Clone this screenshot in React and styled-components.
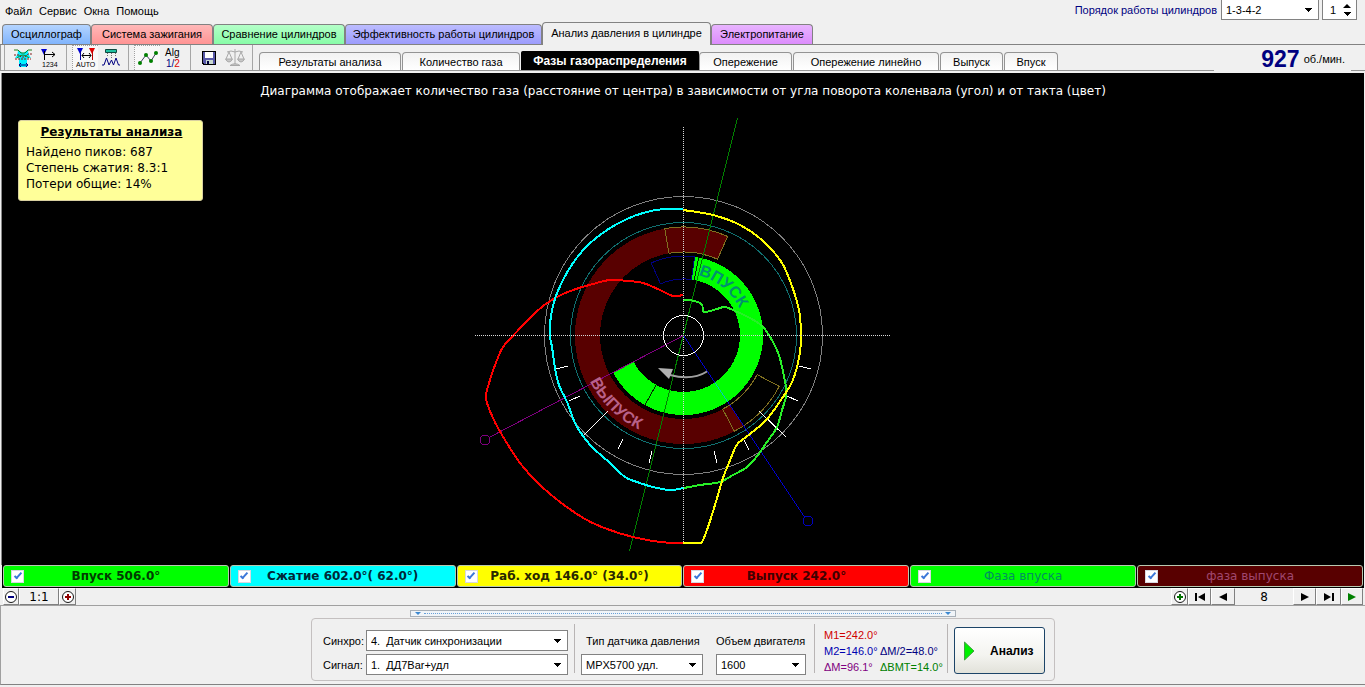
import React from "react";
import styled, { createGlobalStyle, css } from "styled-components";

const UI = '"Liberation Sans", Arial, sans-serif';
const WIDE = '"DejaVu Sans", Verdana, sans-serif';

const Global = createGlobalStyle`
  *, *::before, *::after { box-sizing: border-box; }
  body { margin: 0; background: #f0f0f0; color: #000; font: 11px/14px ${UI}; }
  button, input, select { font: inherit; color: inherit; margin: 0; padding: 0; border-radius: 0; }
  svg { display: block; }
`;

const Window = styled.div`
  min-height: 100vh;
  display: flex;
  flex-direction: column;
  overflow: hidden;
`;

const TopBar = styled.header`
  display: flex;
  justify-content: space-between;
  height: 22px;
  padding: 0 8px 0 5px;
`;

const Menu = styled.nav`
  display: flex;
  align-items: center;
  gap: 7px;
`;

const MenuItem = styled.button`
  border: 0;
  background: none;
`;

const OrderGroup = styled.div`
  display: flex;
  align-items: flex-start;
  gap: 3px;
  & > label { padding-right: 1px; color: #000080; line-height: 20px; }
`;

const Field = styled.div`
  position: relative;
  width: ${(p) => p.$w}px;
  height: ${(p) => (p.$clipped ? 20 : 21)}px;
  flex: none;
  background: #fff;
  border: 1px solid #828282;
  ${(p) => p.$clipped && css`border-top: 0;`}
  & > svg { position: absolute; right: 6px; top: 8px; pointer-events: none; }
`;

const Select = styled.select`
  appearance: none;
  width: 100%;
  height: 100%;
  border: 0;
  padding: 0 18px 0 4px;
  background: transparent;
  outline: none;
`;

const Spinner = styled.div`
  display: flex;
  width: 35px;
  height: 20px;
  background: #fff;
  border: 1px solid #828282;
  border-top: 0;
  & > input { width: 20px; border: 0; padding-left: 7px; background: none; outline: none; }
`;

const SpinButtons = styled.div`
  display: flex;
  flex-direction: column;
  justify-content: center;
  gap: 4px;
`;

const SpinButton = styled.button`
  display: block;
  border: 0;
  background: none;
`;

const TabBar = styled.div`
  display: flex;
  align-items: flex-end;
  height: 23px;
  padding-left: 2px;
  border-bottom: 1px solid #828282;
`;

const MainTab = styled.button`
  width: ${(p) => p.$w}px;
  height: 20px;
  flex: none;
  padding-bottom: 1px;
  border: 1px solid #828282;
  border-bottom: 0;
  border-radius: 4px 4px 0 0;
  background: ${(p) => p.$bg};
  white-space: nowrap;
  ${(p) => p.$active && css`
    height: 23px;
    margin-bottom: -1px;
    padding-bottom: 2px;
  `}
`;

const ToolRow = styled.div`
  display: flex;
  align-items: flex-end;
  height: 26px;
  padding-left: 3px;
  border-left: 1px solid #989898;
  border-bottom: 1px solid #949494;
`;

const Tools = styled.div`
  display: flex;
  height: 25px;
  flex: none;
`;

const Separator = styled.span`
  width: 1px;
  margin: 0 5px 0 4px;
  background: #a6a6a6;
  &:first-child { margin-left: 0; }
`;

const Tool = styled.button`
  display: grid;
  place-items: center;
  width: 26px;
  height: 25px;
  border: 0;
  background: none;
  ${(p) => p.$pressed && css`
    background: #f8f8f8;
    border: 1px dotted #a0a0a0;
    border-width: 1px 0 0 1px;
  `}
`;

const SubTabs = styled.div`
  display: flex;
  align-items: flex-end;
  gap: 1px;
  flex: 1;
  padding-left: 1px;
`;

const SubTab = styled.button`
  width: ${(p) => p.$w}px;
  height: 18px;
  flex: none;
  border: 1px solid #949494;
  border-bottom: 0;
  border-radius: 4px 4px 0 0;
  background: linear-gradient(#f2f2f2, #fff);
  white-space: nowrap;
  ${(p) => p.$active && css`
    height: 19px;
    margin-right: -1px;
    border-color: #000;
    border-radius: 2px 2px 0 0;
    background: #000;
    color: #fff;
    font-size: 12px;
    font-weight: bold;
  `}
`;

const Rpm = styled.div`
  display: flex;
  align-items: center;
  justify-content: flex-end;
  gap: 4px;
  width: 137px;
  height: 25px;
  margin: 0 14px -1px 0;
  padding-right: 6px;
  background: #f0f0f0;
  & > strong { color: #000080; font-size: 23px; line-height: 24px; }
`;

const Canvas = styled.main`
  position: relative;
  display: flex;
  flex-direction: column;
  align-items: center;
  flex: 1;
  margin: 2px 1px 0 1px;
  padding-top: 10px;
  border-left: 1px solid #888;
  background: #000;
`;

const Title = styled.h1`
  margin: 0 0 12px;
  color: #fff;
  font: 12px/16px ${WIDE};
`;

const Note = styled.aside`
  position: absolute;
  left: 16px;
  top: 47px;
  width: 185px;
  height: 81px;
  padding: 3px 8px;
  border: 1px solid #d8d0a0;
  border-radius: 3px;
  background: #ffff99;
  font: 12px/16px ${WIDE};
  & > h2 { margin: 0 0 4px; padding-left: 2px; font-size: 12px; text-align: center; text-decoration: underline; white-space: nowrap; }
  & > p { margin: 0 0 0 -1px; white-space: nowrap; }
`;

const Chart = styled.svg`
  width: 420px;
  height: 446px;
`;

const RingText = styled.text`
  font: bold 16px ${UI};
  fill: ${(p) => p.$color};
`;

const Legend = styled.div`
  display: flex;
  gap: 1px;
  margin: 0 1px 0 2px;
  padding: 0 1px;
  background: #000;
`;

const LegendItem = styled.label`
  display: grid;
  grid-template-columns: 13px 1fr 13px;
  align-items: center;
  flex: 1;
  height: 22px;
  margin-bottom: 1px;
  padding: 0 7px;
  border: 1px solid #b8c8b0;
  border-radius: 3px;
  background: ${(p) => p.$bg};
  color: ${(p) => p.$color};
  font: ${(p) => (p.$plain ? "normal" : "bold")} 12px/16px ${WIDE};
  text-align: center;
  white-space: nowrap;
`;

const Check = styled.input`
  appearance: none;
  display: grid;
  place-items: center;
  width: 13px;
  height: 13px;
  border: 1px solid #d8d8e0;
  background: #fff;
  &:checked::before {
    content: "";
    width: 4px;
    height: 8px;
    margin-bottom: 2px;
    border: solid #3c78d8;
    border-width: 0 2px 2px 0;
    transform: rotate(42deg);
  }
`;

const NavBar = styled.div`
  display: flex;
  justify-content: space-between;
  height: 18px;
  padding: 0 2px 0 3px;
  border-bottom: 1px solid #a0a0a0;
`;

const NavGroup = styled.div`
  display: flex;
`;

const NavButton = styled.button`
  display: grid;
  place-items: center;
  width: ${(p) => p.$w}px;
  height: 17px;
  border: 1px solid #808080;
  border-top-color: #fff;
  border-left-color: #fff;
  background: #f0f0f0;
  font: 12px/14px ${WIDE};
`;

const Page = styled.output`
  width: 58px;
  font: 12px/18px ${WIDE};
  text-align: center;
`;

const Bottom = styled.footer`
  display: flex;
  flex-direction: column;
  align-items: center;
  padding: 4px 0 3px;
  margin-bottom: 2px;
  border-left: 1px solid #a0a0a0;
  border-bottom: 1px solid #828282;
`;

const Splitter = styled.button`
  display: flex;
  align-items: center;
  justify-content: space-between;
  width: 546px;
  height: 7px;
  margin-bottom: 1px;
  padding: 0 4px;
  border: 1px solid #a8b0b8;
  background: #f0f4f8;
  &::before { content: ""; order: 1; flex: 1; margin: 0 3px; border-top: 1px dotted #68a0d8; }
  & > :last-child { order: 2; }
`;

const Panel = styled.section`
  display: flex;
  align-items: flex-start;
  height: 63px;
  padding: 8px 9px 8px 8px;
  border: 1px solid #c4c0c0;
  border-radius: 4px;
`;

const Divider = styled.span`
  width: 1px;
  height: 49px;
  margin-top: -3px;
  background: #b8b4b4;
`;

const SourceGrid = styled.div`
  display: grid;
  grid-template-columns: 43px 202px;
  row-gap: 3px;
  align-items: center;
  margin: 3px 6px 0 3px;
`;

const Column = styled.div`
  display: flex;
  flex-direction: column;
  width: ${(p) => p.$w}px;
  margin: 7px 0 0 ${(p) => p.$left}px;
  & > label { margin-bottom: 6px; line-height: 14px; padding-left: ${(p) => p.$indent || 0}px; white-space: nowrap; }
`;

const Readings = styled.dl`
  display: grid;
  grid-template-columns: 56px 67px;
  grid-auto-rows: 16px;
  margin: 0 0 0 9px;
  line-height: 16px;
  & > dd { margin: 0; white-space: nowrap; }
`;

const Reading = styled.dd`
  color: ${(p) => p.$color};
  ${(p) => p.$full && css`grid-column: 1 / -1;`}
`;

const Analyse = styled.button`
  display: flex;
  align-items: center;
  gap: 15px;
  width: 91px;
  height: 47px;
  margin-left: 6px;
  padding: 0 0 0 9px;
  border: 1px solid #1c4468;
  border-radius: 3px;
  background: linear-gradient(#fff, #f4f4f0 60%, #e2e2da);
  font-size: 12px;
  font-weight: bold;
`;

const Down = () => (
  <svg width="8" height="4" shapeRendering="crispEdges"><path d="M0 0H8L4 4Z" /></svg>
);

const Picker = ({ id, w, clipped, value }) => (
  <Field $w={w} $clipped={clipped}>
    <Select id={id} defaultValue={value}><option value={value}>{value}</option></Select>
    <Down />
  </Field>
);

const icons = {
  phase: (
    <svg width="22" height="22" fill="none">
      <path fill="#00f0ff" d="M6 3C6 6 5 9 3 11H7V20H15V11H19C17 9 16 6 16 3L11 6Z" />
      <path stroke="#208020" d="M2 3H6L9 6H13L16 3H20M5 11Q11 5 17 11" />
      <path stroke="#801818" strokeDasharray="2 1" d="M2 8H7L9 10H13L16 7H20M3 12H19" />
      <path stroke="#000080" d="M7 18H16M9 16L7 18L9 20M14 16L16 18L14 20" />
    </svg>
  ),
  count: (
    <svg width="22" height="22">
      <path fill="#0000d0" d="M3 2H9L6 8Z" />
      <path stroke="#000" d="M6.500 4V13M6 7.500H17M14 5L17 7.500L14 10" fill="none" />
      <text x="4" y="20" fontFamily={UI} fontSize="7">1234</text>
    </svg>
  ),
  auto: (
    <svg width="22" height="22">
      <path fill="#0000d0" d="M2 1H8L5 7Z" />
      <path fill="#e00000" d="M14 1H20L17 7Z" />
      <path stroke="#0000a0" d="M5.500 4V13" />
      <path stroke="#c00000" d="M17.500 4V13" />
      <path stroke="#000" d="M7 8.500H16M9 6L7 8.500L9 11M14 6L16 8.500L14 11" fill="none" />
      <text x="1" y="20" fontFamily={UI} fontSize="7">AUTO</text>
    </svg>
  ),
  peaks: (
    <svg width="22" height="22" fill="none">
      <path fill="#20c0a0" stroke="#104840" d="M5.500 2.500H16.500V5.500H5.500Z" />
      <path stroke="#707070" strokeDasharray="1 1" d="M7.500 6V10M11.500 6V12M15.500 6V10" />
      <path stroke="#000080" d="M2 18H4L6.500 11L9 18L11.500 13L13.500 18L16 11L18.500 18H20" />
    </svg>
  ),
  points: (
    <svg width="22" height="22" fill="none">
      <path stroke="#404060" d="M3 16L9 8L14 14L19 6" />
      <g fill="#008000"><circle cx="3" cy="16" r="2" /><circle cx="9" cy="8" r="2" /><circle cx="14" cy="14" r="2" /><circle cx="19" cy="6" r="2" /></g>
    </svg>
  ),
  alg: (
    <svg width="22" height="22">
      <text x="3" y="9" fontFamily={UI} fontSize="10">Alg</text>
      <text x="4" y="20" fontFamily={UI} fontSize="10" fill="#000080">1/<tspan fill="#e00000">2</tspan></text>
    </svg>
  ),
  save: (
    <svg width="18" height="18" shapeRendering="crispEdges">
      <path fill="#000" d="M2 2H16V16H3L2 15Z" />
      <path fill="#5858a8" d="M3 3H15V15H4L3 14Z" />
      <path fill="#fff" d="M5 3H13V9H5Z" />
      <path fill="#c8d8d0" d="M6 11H13V15H6Z" />
      <path fill="#000040" d="M7 12H9V15H7Z" />
    </svg>
  ),
  scales: (
    <svg width="22" height="22" fill="none" stroke="#a8a8a8">
      <path d="M11 2V17M3 5Q7 3 11 5Q15 3 19 5M5 5L2 12M5 5L8 12M17 5L14 12M17 5L20 12" />
      <path fill="#c8c8c8" d="M1.500 12H8.500Q7 15 5 15Q3 15 1.500 12ZM13.500 12H20.500Q19 15 17 15Q15 15 13.500 12ZM6 18.500Q11 15 16 18.500Z" />
    </svg>
  ),
};

const toolGroups = [
  [["phase", "Фаза"], ["count", "Номера цилиндров"]],
  [["auto", "Авто", true], ["peaks", "Пики"]],
  [["points", "Точки", true], ["alg", "Алгоритм"]],
  [["save", "Сохранить"], ["scales", "Сравнить"]],
];

const mainTabs = [
  ["Осциллограф", 89, "linear-gradient(#b4d4ff, #80b4fc)"],
  ["Система зажигания", 122, "linear-gradient(#ffb8b8, #ff9494)"],
  ["Сравнение цилиндров", 132, "linear-gradient(#b4ffc8, #88fca8)"],
  ["Эффективность работы цилиндров", 197, "linear-gradient(#bcbcff, #9c9cfc)"],
  ["Анализ давления в цилиндре", 169, "#f0f0f0", true],
  ["Электропитание", 102, "linear-gradient(#e8b4ff, #dc8cfc)"],
];

const subTabs = [
  ["Результаты анализа", 142],
  ["Количество газа", 118],
  ["Фазы газораспределения", 178, true],
  ["Опережение", 93],
  ["Опережение линейно", 146],
  ["Выпуск", 63],
  ["Впуск", 54],
];

const legend = [
  ["Впуск 506.0°", "#00ff00", "#003c00"],
  ["Сжатие 602.0°( 62.0°)", "#00ffff", "#002838"],
  ["Раб. ход 146.0° (34.0°)", "#ffff00", "#282800"],
  ["Выпуск 242.0°", "#ff0000", "#400000"],
  ["Фаза впуска", "#00ff00", "#009060", true],
  ["фаза выпуска", "#580000", "#a04870", true],
];

const CX = 683.5;
const CY = 335.5;
const polar = (r, deg) => {
  const a = (deg * Math.PI) / 180;
  return `${(CX + r * Math.sin(a)).toFixed(1)} ${(CY - r * Math.cos(a)).toFixed(1)}`;
};
const sector = (r1, r2, from, to) => {
  const large = to - from > 180 ? 1 : 0;
  return `M${polar(r2, from)}A${r2} ${r2} 0 ${large} 1 ${polar(r2, to)}L${polar(r1, to)}A${r1} ${r1} 0 ${large} 0 ${polar(r1, from)}Z`;
};

// Catmull-Rom spline through the measured points
const spline = (pts) => {
  const at = (i) => pts[Math.max(0, Math.min(pts.length - 1, i))];
  let d = `M${pts[0]}`;
  for (let i = 0; i < pts.length - 1; i++) {
    const [a, b, c, e] = [at(i - 1), at(i), at(i + 1), at(i + 2)];
    const c1 = [b[0] + (c[0] - a[0]) / 6, b[1] + (c[1] - a[1]) / 6];
    const c2 = [c[0] - (e[0] - b[0]) / 6, c[1] - (e[1] - b[1]) / 6];
    d += `C${c1} ${c2} ${c}`;
  }
  return d;
};

const curves = [
  ["#ff0000", [[683, 295], [673, 296], [660, 290], [643, 283], [628, 281], [610, 280], [593, 284], [573, 290], [557, 297], [543, 306], [527, 321], [510, 339], [503, 347], [497, 360], [490, 380], [486, 398], [493, 418], [502, 435], [520, 463], [540, 485], [560, 502], [585, 519], [607, 529], [633, 537], [660, 542], [683, 543]]],
  ["#00ffff", [[683, 209], [663, 209], [643, 213], [627, 219], [607, 230], [588, 245], [573, 263], [562, 282], [554, 302], [550, 323], [550, 337], [552, 347], [555, 368], [559, 385], [567, 402], [575, 423], [583, 436], [593, 448], [610, 463], [625, 477], [637, 482], [653, 487], [670, 490], [684, 488]]],
  ["#28f028", [[684, 488], [700, 485], [720, 482], [733, 475], [747, 467], [758, 455], [767, 442], [777, 427], [782, 410], [786, 397], [786, 387], [782, 367], [779, 355], [773, 342], [763, 327], [750, 318], [735, 311], [725, 307], [717, 309], [704, 312], [702, 305], [695, 301], [683, 300]]],
  ["#ffff00", [[683, 543], [700, 543], [703, 540], [708, 527], [715, 505], [723, 478], [729, 463], [736, 446], [742, 440], [755, 430], [768, 418], [783, 397], [792, 382], [798, 363], [801, 343], [801, 330], [799, 310], [793, 289], [782, 263], [763, 241], [740, 225], [713, 215], [683, 210]]],
];

const Diagram = () => (
  <Chart viewBox="473 111 420 446" fill="none" role="img" aria-label="Фазы газораспределения">
    <defs>
      <path id="intake-arc" d={`M${polar(62, 14)}A62 62 0 0 1 ${polar(62, 85)}`} />
      <path id="exhaust-arc" d={`M${polar(104, 244)}A104 104 0 0 0 ${polar(104, 190)}`} />
    </defs>
    <g shapeRendering="crispEdges">
      <path fill="#580000" d={sector(83.5, 108.5, 146.3, 384)} />
      <path stroke="#000080" d={sector(56.5, 79.5, -24, 8)} />
      <path fill="#00ff00" d={sector(56.5, 79.5, 8.4, 242)} />
      <path stroke="#002800" d={`M${polar(56.5, 11)}L${polar(79.5, 11)}M${polar(56.5, 209)}L${polar(79.5, 209)}`} />
      <g stroke="#807020">
        <path d={sector(83.5, 108.5, -10, 24)} />
        <path d={sector(83.5, 108.5, 118, 152)} />
      </g>
      <circle cx={CX} cy={CY} r="139" stroke="#808080" />
      <circle cx={CX} cy={CY} r="113" stroke="#107070" />
      <path stroke="#008000" d="M737.500 118L629.500 551" />
      <path stroke="#800080" d="M683.500 335.500L490 437" />
      <path stroke="#0000d0" d={`M${polar(0, 0)}L${polar(57, 146.3)}M${polar(79.5, 146.3)}L${polar(218, 146.3)}`} />
      <path stroke="#00c8c0" d={`M${polar(57, 146.3)}L${polar(79.5, 146.3)}`} />
      <path stroke="#fff" d="M556 369L568 366M569 401L580 396M583 436L608 411M618 449L623 439M649 463L652 451M799 366L811 369M787 396L798 401M759 411L786 437M744 440L749 450M714 451L717 463" />
      <g strokeWidth="2">
        {curves.map(([color, pts]) => <path key={color} stroke={color} d={spline(pts)} />)}
      </g>
      <circle cx={CX} cy={CY} r="20" stroke="#fff" />
      <circle cx="485" cy="440" r="5" stroke="#800080" />
      <circle cx="808" cy="521" r="5" stroke="#0000c0" />
      <path stroke="#d8d8d8" strokeDasharray="1 1" d="M683.500 127V543M475 335.500H890" />
    </g>
    <path stroke="#a0a0a0" strokeWidth="2" d="M707 371.500Q692 381 670 375" />
    <path fill="#b0b0b0" d="M658 368L673 369L669 379Z" />
    <RingText $color="#009070"><textPath href="#intake-arc">ВПУСК</textPath></RingText>
    <RingText $color="#b86088"><textPath href="#exhaust-arc">ВЫПУСК</textPath></RingText>
  </Chart>
);

const Zoom = ({ color, plus }) => (
  <svg width="14" height="14" fill="none">
    <circle cx="7" cy="7" r="5.500" fill="#fff" stroke="#181818" />
    <path stroke={color} strokeWidth="2" d={plus ? "M4 7H10M7 4V10" : "M4 7H10"} />
  </svg>
);

const Step = ({ d, color = "#000" }) => (
  <svg width="12" height="10" fill={color}><path d={d} /></svg>
);

export default function App() {
  return (
    <Window>
      <Global />
      <TopBar>
        <Menu>
          {["Файл", "Сервис", "Окна", "Помощь"].map((m) => <MenuItem key={m}>{m}</MenuItem>)}
        </Menu>
        <OrderGroup>
          <label htmlFor="order">Порядок работы цилиндров</label>
          <Picker id="order" w={98} clipped value="1-3-4-2" />
          <Spinner>
            <input aria-label="Цилиндр" defaultValue="1" />
            <SpinButtons>
              <SpinButton aria-label="Больше"><svg width="8" height="4"><path d="M0 4H8L4 0Z" /></svg></SpinButton>
              <SpinButton aria-label="Меньше"><Down /></SpinButton>
            </SpinButtons>
          </Spinner>
        </OrderGroup>
      </TopBar>

      <TabBar>
        {mainTabs.map(([t, w, bg, active]) => <MainTab key={t} $w={w} $bg={bg} $active={active}>{t}</MainTab>)}
      </TabBar>

      <ToolRow>
        <Tools>
          <Separator />
          {toolGroups.map((group, i) => (
            <React.Fragment key={i}>
              {group.map(([k, name, pressed]) => <Tool key={k} aria-label={name} $pressed={pressed}>{icons[k]}</Tool>)}
              <Separator />
            </React.Fragment>
          ))}
        </Tools>
        <SubTabs>
          {subTabs.map(([t, w, active]) => <SubTab key={t} $w={w} $active={active}>{t}</SubTab>)}
        </SubTabs>
        <Rpm><strong>927</strong><span>об./мин.</span></Rpm>
      </ToolRow>

      <Canvas>
        <Title>Диаграмма отображает количество газа (расстояние от центра) в зависимости от угла поворота коленвала (угол) и от такта (цвет)</Title>
        <Diagram />
        <Note>
          <h2>Результаты анализа</h2>
          <p>Найдено пиков: 687</p>
          <p>Степень сжатия: 8.3:1</p>
          <p>Потери общие: 14%</p>
        </Note>
      </Canvas>

      <Legend>
        {legend.map(([t, bg, color, plain]) => (
          <LegendItem key={t} $bg={bg} $color={color} $plain={plain}>
            <Check type="checkbox" defaultChecked />
            <span>{t}</span>
          </LegendItem>
        ))}
      </Legend>

      <NavBar>
        <NavGroup>
          <NavButton $w={16} aria-label="Уменьшить"><Zoom color="#000080" /></NavButton>
          <NavButton $w={40}>1:1</NavButton>
          <NavButton $w={17} aria-label="Увеличить"><Zoom color="#900000" plus /></NavButton>
        </NavGroup>
        <NavGroup>
          <NavButton $w={17} aria-label="Добавить"><Zoom color="#007000" plus /></NavButton>
          <NavButton $w={23} aria-label="В начало"><Step d="M1 1H3V9H1ZM11 1V9L4 5Z" /></NavButton>
          <NavButton $w={24} aria-label="Назад"><Step d="M10 1V9L2 5Z" /></NavButton>
          <Page>8</Page>
          <NavButton $w={23} aria-label="Вперёд"><Step d="M2 1V9L10 5Z" /></NavButton>
          <NavButton $w={25} aria-label="В конец"><Step d="M1 1V9L8 5ZM9 1H11V9H9Z" /></NavButton>
          <NavButton $w={22} aria-label="Пуск"><Step d="M2 1V9L10 5Z" color="#008000" /></NavButton>
        </NavGroup>
      </NavBar>

      <Bottom>
        <Splitter aria-label="Свернуть панель">
          <svg width="6" height="3"><path fill="#3c88d0" d="M0 0H6L3 3Z" /></svg>
          <svg width="6" height="3"><path fill="#3c88d0" d="M0 0H6L3 3Z" /></svg>
        </Splitter>
        <Panel>
          <SourceGrid>
            <label htmlFor="sync">Синхро:</label>
            <Picker id="sync" w={202} value={"4.\u00a0 Датчик синхронизации"} />
            <label htmlFor="signal">Сигнал:</label>
            <Picker id="signal" w={202} value={"1.\u00a0 ДД7Bar+удл"} />
          </SourceGrid>
          <Divider />
          <Column $w={122} $left={6} $indent={5}>
            <label htmlFor="sensor">Тип датчика давления</label>
            <Picker id="sensor" w={122} value="MPX5700 удл." />
          </Column>
          <Column $w={98} $left={13}>
            <label htmlFor="volume">Объем двигателя</label>
            <Picker id="volume" w={90} value="1600" />
          </Column>
          <Divider />
          <Readings>
            <Reading $full $color="#d00000">M1=242.0°</Reading>
            <Reading $color="#0000b0">M2=146.0°</Reading>
            <Reading $color="#000080">ΔM/2=48.0°</Reading>
            <Reading $color="#800080">ΔM=96.1°</Reading>
            <Reading $color="#008000">ΔBMT=14.0°</Reading>
          </Readings>
          <Divider />
          <Analyse>
            <svg width="11" height="20"><path fill="#00f000" stroke="#40a040" d="M.5 1V19L10 10Z" /></svg>
            Анализ
          </Analyse>
        </Panel>
      </Bottom>
    </Window>
  );
}
